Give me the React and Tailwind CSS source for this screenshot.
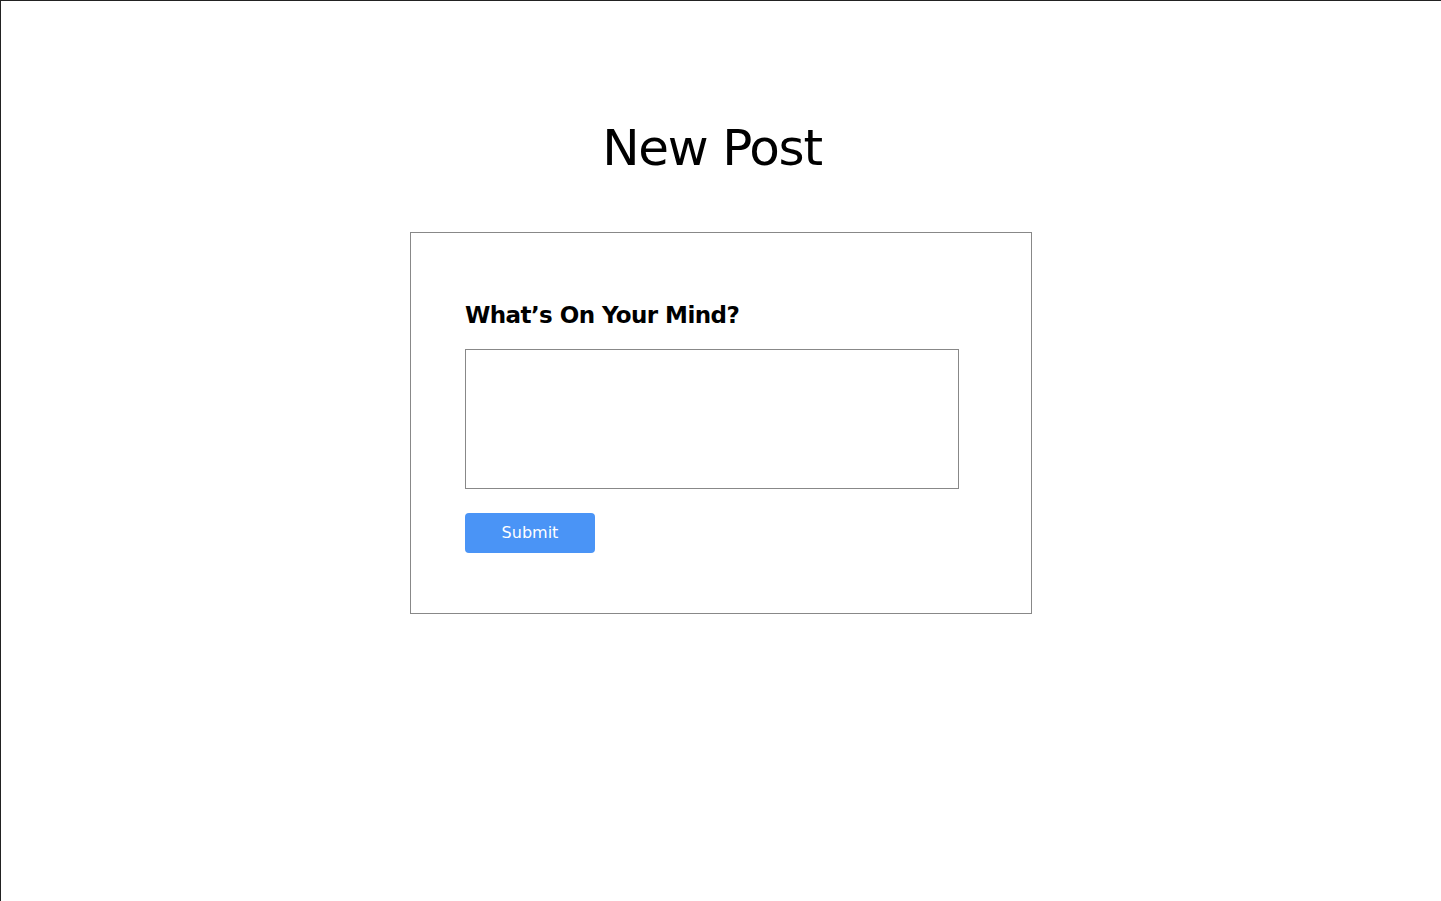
export default function App() {
  return (
    <div
      className="min-h-screen h-[901px] bg-white border-l border-t border-[#222]"
      style={{ fontFamily: '"DejaVu Sans", "Noto Sans", sans-serif' }}
    >
      <div className="flex flex-col items-center">
        <h1 className="mt-[112px] mr-[18px] text-[50px] leading-[70px] font-normal text-black tracking-tight">
          New Post
        </h1>

        <div className="mt-[49px] w-[622px] h-[382px] border border-[#888] pl-[54px] pt-[67px]">
          <h2 className="text-[23px] leading-[30px] font-bold text-black tracking-tight">
            What’s On Your Mind?
          </h2>
          <textarea className="mt-[19px] block w-[494px] h-[140px] border border-[#888] resize-none outline-none" />
          <button
            type="button"
            className="mt-[24px] w-[130px] h-[40px] rounded-[4px] bg-[#4a94f6] text-white text-[16px]"
          >
            Submit
          </button>
        </div>
      </div>
    </div>
  );
}
